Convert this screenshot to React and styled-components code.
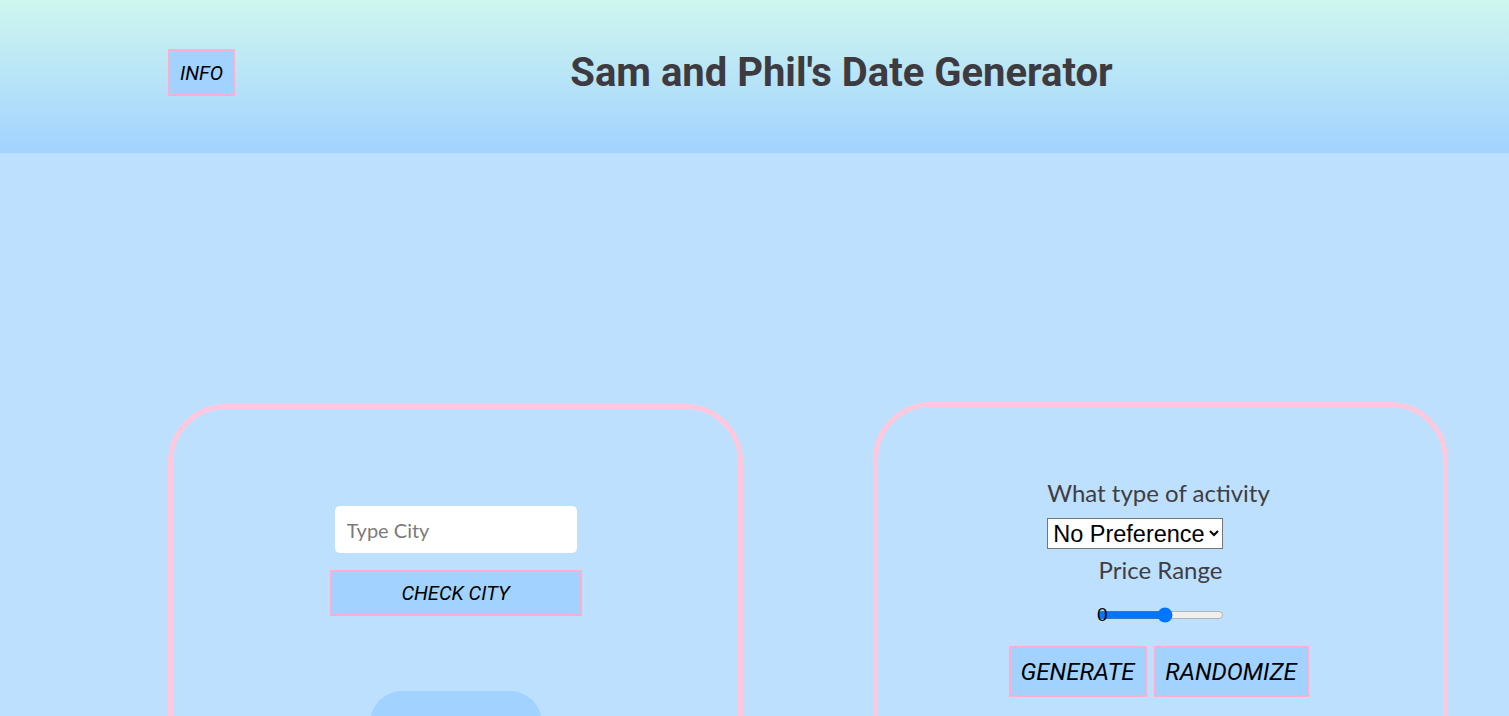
import React from "react";
import styled, { createGlobalStyle } from "styled-components";

const GlobalStyle = createGlobalStyle`
  html, body { margin: 0; padding: 0; }
  body {
    background: #bde0fe;
    font-family: "Lato", "Liberation Sans", sans-serif;
    overflow: hidden;
  }
`;

const Page = styled.div`
  min-height: 716px;
  background: #bde0fe;
`;

const Header = styled.header`
  height: 153px;
  box-sizing: border-box;
  padding: 0 61px 8px 168px;
  display: flex;
  align-items: center;
  background: linear-gradient(to bottom, #cef7ef 0%, #a2d2ff 100%);
`;

const PinkButton = styled.button`
  box-sizing: border-box;
  background: #a2d2ff;
  border: 2px solid #ffafcc;
  font-family: "Roboto", "Liberation Sans", sans-serif;
  font-style: italic;
  font-weight: 400;
  color: #000;
  font-size: ${(p) => p.$size || 18}px;
  width: ${(p) => (p.$w ? `${p.$w}px` : "auto")};
  height: ${(p) => p.$h}px;
  padding: 0;
  margin: 0;
  margin-top: ${(p) => p.$mt || 0}px;
  cursor: pointer;
  display: inline-flex;
  align-items: center;
  justify-content: center;
`;

const Title = styled.h1`
  flex: 1;
  margin: 0;
  text-align: center;
  font-family: "Roboto", "Liberation Sans", sans-serif;
  font-weight: 700;
  font-size: 40px;
  color: #3d3a40;
`;

const Main = styled.main`
  padding: 249px 61px 0 168px;
  display: flex;
  justify-content: space-between;
  align-items: flex-start;
`;

const Card = styled.section`
  box-sizing: border-box;
  width: 575px;
  min-height: 420px;
  margin-top: ${(p) => p.$offset || 0}px;
  border: 5px solid #ffc8dd;
  border-radius: 58px;
  display: flex;
  flex-direction: column;
  align-items: center;
  padding-top: ${(p) => p.$pt}px;
`;

const CityInput = styled.input`
  box-sizing: border-box;
  width: 242px;
  height: 47px;
  border: none;
  border-radius: 5px;
  background: #fff;
  padding: 0 12px;
  font-family: "Lato", sans-serif;
  font-size: 20px;
  color: #333;
  outline: none;
  &::placeholder { color: #7b7b7b; }
`;

const Blob = styled.div`
  width: 172px;
  height: 90px;
  margin-top: 75px;
  background: #a2d2ff;
  border-radius: 32px;
`;

const FieldGroup = styled.div`
  display: flex;
  flex-direction: column;
  align-items: flex-start;
  margin-right: 4px;
`;

const Label = styled.label`
  font-family: "Lato", sans-serif;
  font-size: 24px;
  line-height: 28px;
  color: #403d44;
  margin-top: ${(p) => p.$mt || 0}px;
`;

const Select = styled.select`
  margin-top: 11px;
  height: 31px;
  font-family: "Liberation Sans", Arial, sans-serif;
  font-size: 23.5px;
  color: #000;
  background: #fff;
  border: 1px solid #767676;
  border-radius: 0;
  padding: 0 1px;
`;

const SliderWrap = styled.div`
  position: relative;
  margin-top: 23px;
  height: 16px;
  display: flex;
  align-items: center;
`;

const Range = styled.input`
  width: 127px;
  height: 16px;
  margin: 0;
`;

const RangeValue = styled.span`
  position: absolute;
  left: 0;
  top: -2px;
  font-family: "Liberation Sans", Arial, sans-serif;
  font-size: 19px;
  line-height: 20px;
  color: #000;
  pointer-events: none;
`;

const ButtonRow = styled.div`
  margin-top: 23px;
  margin-right: 4px;
  display: flex;
  gap: 7px;
`;

export default function App() {
  return (
    <Page>
      <GlobalStyle />
      <Header>
        <PinkButton $w={67} $h={47} $size={20}>INFO</PinkButton>
        <Title>Sam and Phil's Date Generator</Title>
      </Header>
      <Main>
        <Card $offset={2} $pt={97}>
          <CityInput placeholder="Type City" />
          <PinkButton $w={252} $h={46} $size={20} $mt={17}>
            CHECK CITY
          </PinkButton>
          <Blob />
        </Card>
        <Card $pt={72}>
          <FieldGroup>
            <Label>What type of activity</Label>
            <Select defaultValue="none">
              <option value="none">No Preference</option>
              <option value="food">Food</option>
              <option value="outdoors">Outdoors</option>
            </Select>
          </FieldGroup>
          <Label $mt={7}>Price Range</Label>
          <SliderWrap>
            <Range type="range" min="0" max="100" defaultValue="54" />
            <RangeValue>0</RangeValue>
          </SliderWrap>
          <ButtonRow>
            <PinkButton $w={138} $h={51} $size={24}>GENERATE</PinkButton>
            <PinkButton $w={155} $h={51} $size={24}>RANDOMIZE</PinkButton>
          </ButtonRow>
        </Card>
      </Main>
    </Page>
  );
}
